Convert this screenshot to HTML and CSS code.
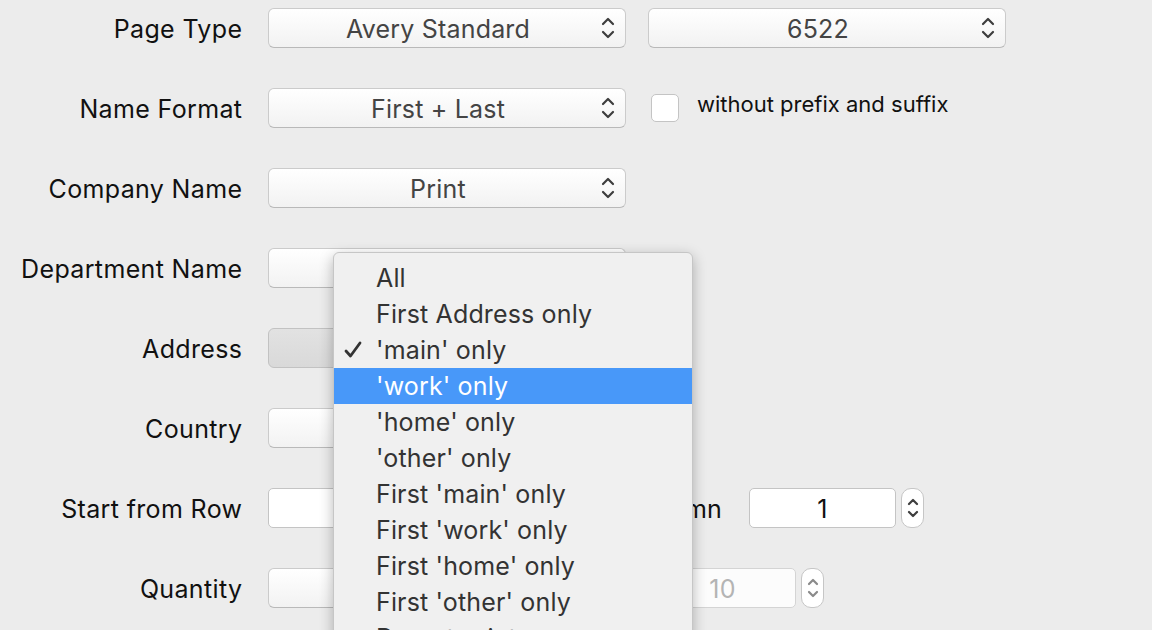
FILE: index.html
```html
<!DOCTYPE html>
<html>
<head>
<meta charset="utf-8">
<link rel="stylesheet" href="styles.css">
</head>
<body>
<div class="page">
  <div class="form">
    <div class="label">Page Type</div>
    <div class="controls">
      <div class="popup"><span class="ptext">Avery Standard</span><svg class="arrows" width="14" height="22" viewBox="0 0 14 22"><path d="M2 7 L7 2 L12 7 M2 15 L7 20 L12 15"/></svg></div>
      <div class="popup gap22"><span class="ptext">6522</span><svg class="arrows" width="14" height="22" viewBox="0 0 14 22"><path d="M2 7 L7 2 L12 7 M2 15 L7 20 L12 15"/></svg></div>
    </div>

    <div class="label">Name Format</div>
    <div class="controls">
      <div class="popup"><span class="ptext">First + Last</span><svg class="arrows" width="14" height="22" viewBox="0 0 14 22"><path d="M2 7 L7 2 L12 7 M2 15 L7 20 L12 15"/></svg></div>
      <div class="checkbox"></div>
      <div class="cblabel">without prefix and suffix</div>
    </div>

    <div class="label">Company Name</div>
    <div class="controls">
      <div class="popup"><span class="ptext">Print</span><svg class="arrows" width="14" height="22" viewBox="0 0 14 22"><path d="M2 7 L7 2 L12 7 M2 15 L7 20 L12 15"/></svg></div>
    </div>

    <div class="label">Department Name</div>
    <div class="controls">
      <div class="popup"><span class="ptext">Print</span><svg class="arrows" width="14" height="22" viewBox="0 0 14 22"><path d="M2 7 L7 2 L12 7 M2 15 L7 20 L12 15"/></svg></div>
    </div>

    <div class="label">Address</div>
    <div class="controls">
      <div class="popup pressed"><span class="ptext">'main' only</span><svg class="arrows" width="14" height="22" viewBox="0 0 14 22"><path d="M2 7 L7 2 L12 7 M2 15 L7 20 L12 15"/></svg></div>
    </div>

    <div class="label">Country</div>
    <div class="controls">
      <div class="popup"><span class="ptext">Print</span><svg class="arrows" width="14" height="22" viewBox="0 0 14 22"><path d="M2 7 L7 2 L12 7 M2 15 L7 20 L12 15"/></svg></div>
    </div>

    <div class="label">Start from Row</div>
    <div class="controls">
      <div class="field">1</div>
      <div class="stepper"><svg width="14" height="30" viewBox="0 0 14 30"><path d="M3 11 L7 7 L11 11 M3 19 L7 23 L11 19"/></svg></div>
      <div class="sublabel">Column</div>
      <div class="field">1</div>
      <div class="stepper"><svg width="14" height="30" viewBox="0 0 14 30"><path d="M3 11 L7 7 L11 11 M3 19 L7 23 L11 19"/></svg></div>
    </div>

    <div class="label">Quantity</div>
    <div class="controls">
      <div class="popup"><span class="ptext">Full Page</span><svg class="arrows" width="14" height="22" viewBox="0 0 14 22"><path d="M2 7 L7 2 L12 7 M2 15 L7 20 L12 15"/></svg></div>
      <div class="field disabled gap23">10</div>
      <div class="stepper disabled"><svg width="14" height="30" viewBox="0 0 14 30"><path d="M3 11 L7 7 L11 11 M3 19 L7 23 L11 19"/></svg></div>
    </div>
  </div>

  <div class="menu">
    <div class="item">All</div>
    <div class="item">First Address only</div>
    <div class="item checked"><svg class="check" width="18" height="18" viewBox="0 0 18 18"><path d="M2 10 L6.5 15 L16 2"/></svg>'main' only</div>
    <div class="item selected">'work' only</div>
    <div class="item">'home' only</div>
    <div class="item">'other' only</div>
    <div class="item">First 'main' only</div>
    <div class="item">First 'work' only</div>
    <div class="item">First 'home' only</div>
    <div class="item">First 'other' only</div>
    <div class="item">Do not print</div>
  </div>
</div>
</body>
</html>
```

FILE: styles.css
```css
html, body {
  margin: 0;
  padding: 0;
  background: #ececec;
  height: 630px;
  overflow: hidden;
}

.page {
  position: relative;
  padding-top: 8px;
  font-family: Inter, "Liberation Sans", Arial, sans-serif;
  font-size: 25px;
  letter-spacing: 0.2px;
  color: #111;
}

.form {
  display: grid;
  grid-template-columns: 242px auto;
  grid-auto-rows: 40px;
  column-gap: 26px;
  row-gap: 40px;
}

.label {
  text-align: right;
  align-self: center;
  white-space: nowrap;
  padding-top: 1px;
  letter-spacing: 0.35px;
  margin-right: -0.35px;
}

.controls {
  display: flex;
  align-items: center;
}

.popup {
  position: relative;
  box-sizing: border-box;
  width: 358px;
  height: 40px;
  padding-right: 18px;
  border: 1px solid #cbcbcb;
  border-bottom-color: #b9b9b9;
  border-radius: 6px;
  background: linear-gradient(#ffffff, #f2f2f2);
  display: flex;
  align-items: center;
  justify-content: center;
  color: #444;
}

.popup.pressed {
  background: linear-gradient(#e2e2e2, #d9d9d9);
  border-color: #c2c2c2;
}

.ptext {
  padding-top: 1px;
}

.arrows {
  position: absolute;
  right: 10px;
  top: 8px;
}

.arrows path, .stepper path {
  fill: none;
  stroke: #3d3d3d;
  stroke-width: 2.2;
  stroke-linecap: round;
  stroke-linejoin: round;
}

.gap22 { margin-left: 22px; }
.gap23 { margin-left: 23px; }

.checkbox {
  box-sizing: border-box;
  width: 28px;
  height: 28px;
  margin-left: 25px;
  border: 1px solid #c4c4c4;
  border-radius: 5px;
  background: #fff;
}

.cblabel {
  margin-left: 18px;
  margin-bottom: 8px;
  font-size: 22px;
  letter-spacing: 0;
  white-space: nowrap;
}

.field {
  box-sizing: border-box;
  width: 147px;
  height: 40px;
  background: #fff;
  border: 1px solid #c4c4c4;
  border-radius: 5px;
  display: flex;
  align-items: center;
  justify-content: center;
  color: #111;
  padding-top: 2px;
}

.field.disabled {
  color: #b4b4b4;
  background: #fcfcfc;
  border-color: #d4d4d4;
}

.stepper {
  box-sizing: border-box;
  width: 23px;
  height: 40px;
  margin-left: 5px;
  background: #fff;
  border: 1px solid #c6c6c6;
  border-radius: 10px;
  display: flex;
  align-items: center;
  justify-content: center;
}

.stepper.disabled path { stroke: #8a8a8a; }

.sublabel {
  width: 279px;
  margin-right: 27px;
  text-align: right;
  padding-top: 1px;
}

.menu {
  position: absolute;
  left: 333px;
  top: 252px;
  width: 360px;
  height: 420px;
  box-sizing: border-box;
  padding-top: 7px;
  background: #f0f0f0;
  border: 1px solid #c6c6c6;
  border-radius: 6px;
  box-shadow: 0 4px 14px rgba(0, 0, 0, 0.28);
  color: #333;
  letter-spacing: 0.15px;
}

.item {
  position: relative;
  height: 36px;
  line-height: 36px;
  padding-left: 42px;
  white-space: nowrap;
}

.item.selected {
  background: #4898f9;
  color: #fff;
}

.check {
  position: absolute;
  left: 10px;
  top: 9px;
}

.check path {
  fill: none;
  stroke: #333;
  stroke-width: 2.8;
  stroke-linecap: round;
  stroke-linejoin: round;
}
```
